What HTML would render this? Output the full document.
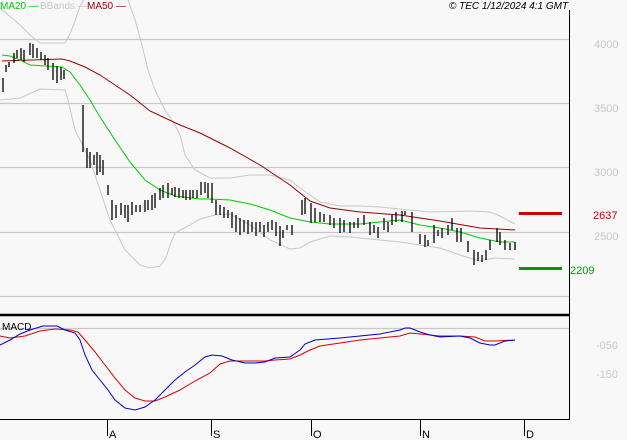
<!DOCTYPE html>
<html><head><meta charset="utf-8"><style>
html,body{margin:0;padding:0;background:#f8f8f8;}
svg{display:block;font-family:"Liberation Sans",sans-serif;}
</style></head><body>
<svg width="627" height="440" viewBox="0 0 627 440" xmlns="http://www.w3.org/2000/svg">
<rect width="627" height="440" fill="#f8f8f8"/>
<g stroke="#c8c8c8" stroke-width="1.3">
<line x1="0" y1="39.5" x2="569" y2="39.5"/>
<line x1="0" y1="103.5" x2="569" y2="103.5"/>
<line x1="0" y1="167.5" x2="569" y2="167.5"/>
<line x1="0" y1="232.5" x2="569" y2="232.5"/>
<line x1="0" y1="296.5" x2="569" y2="296.5"/>
<line x1="0" y1="328.5" x2="569" y2="328.5"/>
</g>
<line x1="569.5" y1="10" x2="569.5" y2="420" stroke="#000" stroke-width="1"/>
<line x1="0" y1="315" x2="570" y2="315" stroke="#000" stroke-width="2.5"/>
<line x1="0" y1="419.5" x2="570" y2="419.5" stroke="#000" stroke-width="1"/>
<g stroke="#000" stroke-width="1">
<line x1="107.5" y1="419" x2="107.5" y2="436"/>
<line x1="211.5" y1="419" x2="211.5" y2="436"/>
<line x1="311.5" y1="419" x2="311.5" y2="436"/>
<line x1="420.5" y1="419" x2="420.5" y2="436"/>
<line x1="524.5" y1="419" x2="524.5" y2="436"/>
</g>
<g font-size="11" fill="#000">
<text x="109" y="438">A</text><text x="213" y="438">S</text><text x="313" y="438">O</text><text x="422" y="438">N</text><text x="526" y="438">D</text>
</g>
<g fill="none" stroke="#c8c8c8" stroke-width="1">
<polyline points="0,8 20,25 30,35 40,43 65,43 70,34 76,18 80,6 84,0"/>
<polyline points="128,0 135,20 142,45 148,70 155,90 165,110 175,125 180,135 185,155 195,170 210,178 230,178 250,175 270,175 290,180 300,188 320,202 340,206 360,206 380,207 400,209 430,212 470,211 490,212 500,216 515,224"/>
<polyline points="0,100 20,98 40,89 65,90 68,100 75,130 90,160 100,190 110,220 125,250 140,265 150,268 160,266 166,258 170,245 175,233 190,225 200,219 215,215 230,214 250,225 270,240 290,249 300,248 310,242 330,236 350,237 380,240 400,242 420,245 440,248 460,255 480,261 495,258 515,259"/>
</g>
<polyline fill="none" stroke="#990000" stroke-width="1" points="2,61 62,59 70,61 85,67 100,75 130,95 150,111 180,125 200,133 230,148 260,165 290,185 310,201 330,208 360,212 400,215 440,221 480,228 515,230"/>
<polyline fill="none" stroke="#00cc00" stroke-width="1" points="2,55 10,56 20,60 30,65 62,67 70,72 80,85 90,100 100,117 115,140 130,162 145,180 160,190 175,196 200,199 210,199 230,200 250,204 270,210 290,218 310,222 330,224 360,224 380,222 400,220 420,225 440,228 460,232 480,238 500,242 515,242"/>
<g stroke="#000" stroke-width="1.3" fill="none">
<path d="M3 78V92M6 65V72M9 62V67M14 53V63M17 50V58M21 48V60M24 50V62M30 43V55M33 44V58M37 48V58M41 52V60M45 55V65M48 58V70M53 63V80M57 66V83M61 67V80M64 70V79M83 105V152M87 148V168M90 152V168M94 155V165M97 152V175M100 155V172M103 160V175M108 185V195M112 200V220M116 205V218M121 203V215M125 205V218M128 205V222M132 202V215M136 205V212M140 205V212M145 200V212M148 200V210M152 195V210M155 193V208M160 188V200M163 185V198M168 183V198M172 188V195M175 187V197M179 188V198M183 190V198M186 190V200M190 190V200M193 190V198M197 190V198M201 182V195M205 182V193M208 183V198M212 183V203M216 200V215M220 205V215M224 207V218M228 210V218M232 212V228M236 215V232M240 218V235M244 220V232M248 220V234M252 222V232M256 222V236M260 222V232M264 225V237M268 222V232M272 220V230M276 222V236M280 226V246M283 230V238M287 225V230M292 225V235M302 200V215M305 198V214M311 203V223M315 208V222M320 212V222M324 214V222M330 215V225M334 218V228M340 218V233M344 220V232M350 222V233M354 222V228M358 218V228M364 215V225M370 222V235M374 225V233M378 227V238M384 218V230M388 222V232M392 215V225M396 212V222M402 211V222M405 211V215M412 212V232M420 234V244M425 235V247M428 240V246M434 225V243M438 230V236M442 228V238M448 225V235M452 218V230M457 228V242M461 228V242M468 241V252M474 250V265M478 252V261M482 255V262M486 250V260M490 240V250M497 228V242M500 232V245M505 240V250M510 243V250M515 242V250"/>
</g>
<polyline fill="none" stroke="#dd0000" stroke-width="1" points="0,336 10,338 25,336 40,331 55,329 70,330 78,332 85,340 95,352 105,365 115,378 125,390 135,398 145,401 155,401 165,397 180,390 195,381 210,373 220,364 230,361 250,361 265,361 275,360 290,359 300,355 310,350 320,346 340,343 360,340 380,338 400,336 410,333 420,334 440,336 460,336 475,337 485,341 495,341 515,340"/>
<polyline fill="none" stroke="#0000cc" stroke-width="1" points="0,345 10,340 20,334 30,330 43,326 57,326 65,330 75,333 80,340 85,355 92,370 100,380 108,390 115,400 125,408 135,410 145,407 155,400 165,390 175,380 185,372 195,365 205,357 212,355 222,356 232,360 245,363 255,363 265,362 275,358 290,357 300,350 305,344 315,340 340,338 360,336 380,334 400,330 405,328 410,328 420,332 430,335 440,337 460,336 470,338 480,343 490,345 495,345 505,341 515,340"/>
<text x="2" y="330" font-size="10" fill="#000">MACD</text>
<g font-size="11" fill="#c8c8c8">
<text x="594" y="48">4000</text><text x="594" y="112">3500</text><text x="594" y="176">3000</text><text x="594" y="240">2500</text>
<text x="596" y="349">-050</text><text x="596" y="378">-150</text>
</g>
<line x1="519" y1="213.5" x2="562" y2="213.5" stroke="#cc0000" stroke-width="3"/>
<line x1="519" y1="268.5" x2="562" y2="268.5" stroke="#009900" stroke-width="3"/>
<text x="593" y="219" font-size="11" fill="#cc0000">2637</text>
<text x="570" y="274" font-size="11" fill="#009900">2209</text>
<g font-size="10">
<text x="0" y="9" fill="#00cc00">MA20 —</text>
<text x="40" y="9" fill="#c8c8c8">BBands —</text>
<text x="87" y="9" fill="#990000">MA50 —</text>
<text x="449" y="9" fill="#000" font-style="italic">© TEC 1/12/2024 4:1 GMT</text>
</g>
</svg>
</body></html>
